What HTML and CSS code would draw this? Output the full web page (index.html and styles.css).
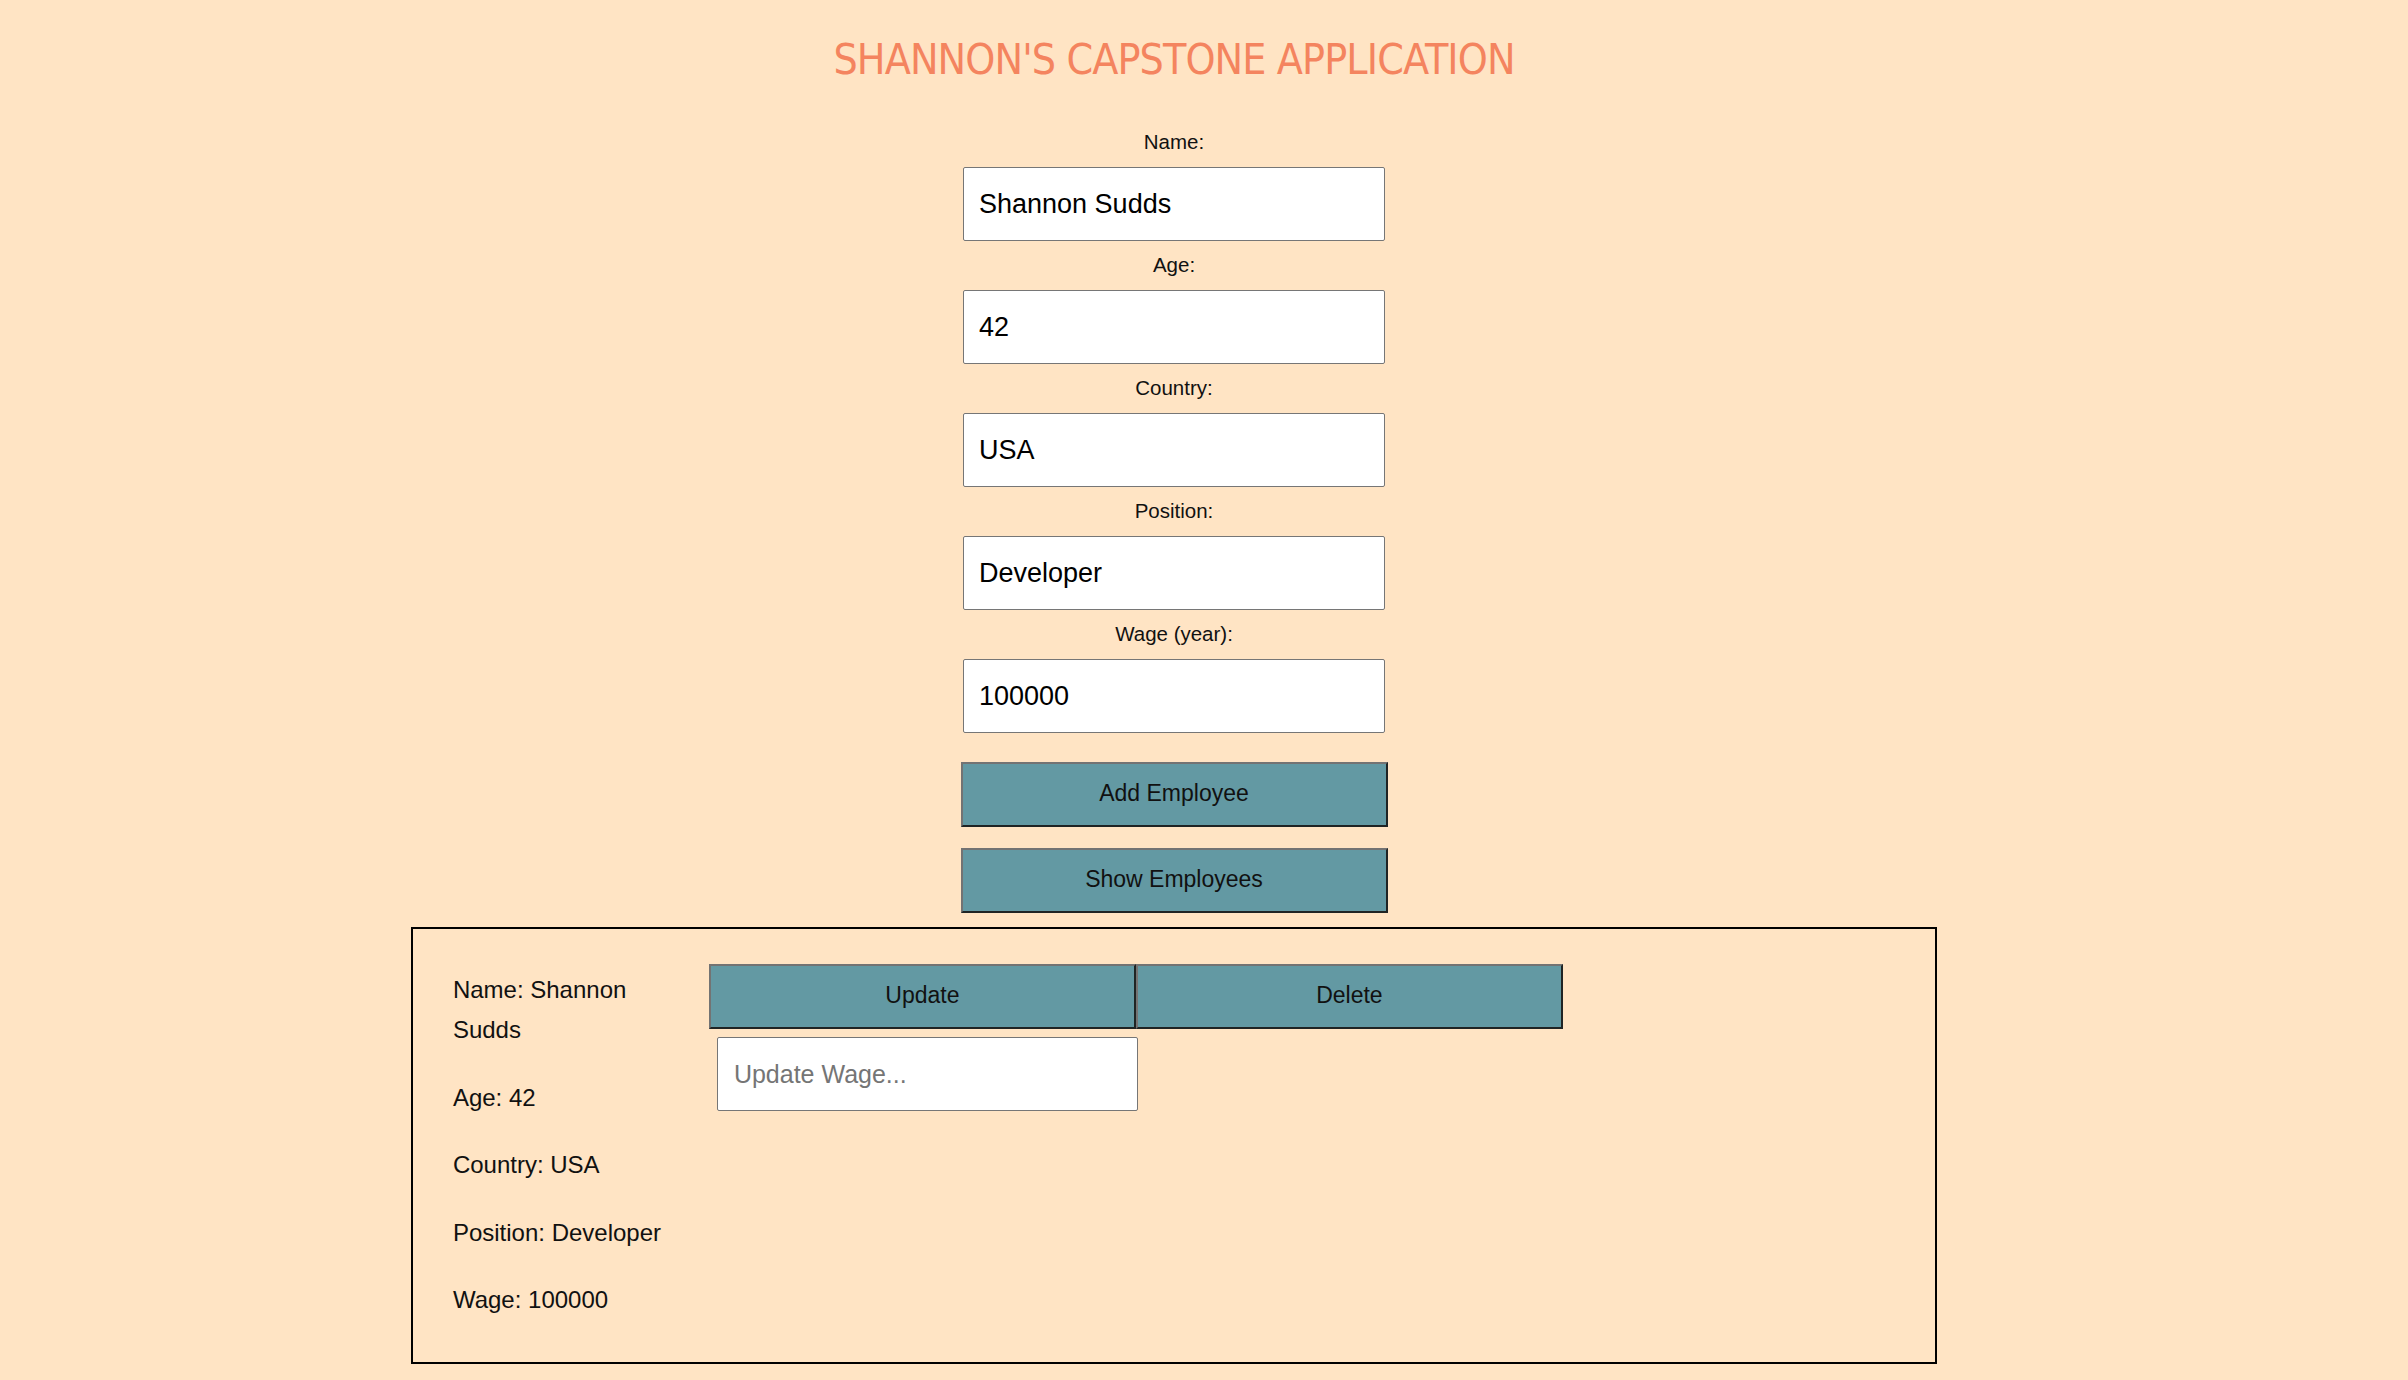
FILE: index.html
```html
<!DOCTYPE html>
<html lang="en">
<head>
<meta charset="utf-8">
<title>Shannon's Capstone Application</title>
<link rel="stylesheet" href="styles.css">
</head>
<body>
<div class="app">
  <h1 class="title">SHANNON'S CAPSTONE APPLICATION</h1>
  <div class="form">
    <label class="label">Name:</label>
    <input class="field" type="text" value="Shannon Sudds">
    <label class="label">Age:</label>
    <input class="field" type="text" value="42">
    <label class="label">Country:</label>
    <input class="field" type="text" value="USA">
    <label class="label">Position:</label>
    <input class="field" type="text" value="Developer">
    <label class="label">Wage (year):</label>
    <input class="field" type="text" value="100000">
    <button class="btn btn-add">Add Employee</button>
    <button class="btn btn-show">Show Employees</button>
  </div>
  <div class="employees">
    <div class="employee">
      <div class="info">
        <p class="info-line">Name: Shannon Sudds</p>
        <p class="info-line">Age: 42</p>
        <p class="info-line">Country: USA</p>
        <p class="info-line">Position: Developer</p>
        <p class="info-line">Wage: 100000</p>
      </div>
      <div class="actions">
        <div class="action-row">
          <button class="btn btn-action">Update</button>
          <button class="btn btn-action">Delete</button>
        </div>
        <input class="wage-input" type="text" placeholder="Update Wage...">
      </div>
    </div>
  </div>
</div>
</body>
</html>
```
FILE: styles.css
```css
html, body {
  margin: 0;
  padding: 0;
  background: #ffe4c4;
}

body {
  font-family: "Liberation Sans", Arial, sans-serif;
  color: #111;
  height: 1380px;
  overflow: hidden;
}

.app {
  width: 2348px;
  display: flex;
  flex-direction: column;
  align-items: center;
}

.title {
  margin: 0;
  padding-top: 35px;
  font-family: "Liberation Sans Narrow", "DejaVu Sans Condensed", "Liberation Sans", sans-serif;
  font-weight: normal;
  font-size: 42.5px;
  letter-spacing: -0.9px;
  line-height: 49px;
  color: #f4845f;
}

.form {
  margin-top: 46px;
  display: flex;
  flex-direction: column;
  align-items: center;
}

.label {
  display: block;
  font-size: 20.5px;
  line-height: 24px;
  margin-bottom: 13px;
  color: #111;
}

.field {
  box-sizing: border-box;
  width: 422px;
  height: 74px;
  margin: 0 0 12px 0;
  padding: 0 15px;
  border: 1px solid #767676;
  border-radius: 2px;
  background: #fff;
  font-family: "Liberation Sans", Arial, sans-serif;
  font-size: 27px;
  color: #000;
  outline: none;
}

.btn {
  box-sizing: border-box;
  width: 427px;
  height: 65px;
  margin: 0;
  padding: 0 0 2px 0;
  background: #6399a3;
  border-top: 2px solid #737373;
  border-left: 2px solid #737373;
  border-bottom: 2px solid #1f2424;
  border-right: 2px solid #1f2424;
  font-family: "Liberation Sans", Arial, sans-serif;
  font-size: 23px;
  color: #111;
}

.btn-add {
  margin-top: 17px;
}

.btn-show {
  margin-top: 21px;
}

.employees {
  box-sizing: border-box;
  width: 65%;
  margin-top: 14px;
  border: 2px solid #000;
  padding: 13.5px 0 14.5px 40px;
}

.employee {
  display: flex;
  align-items: flex-start;
}

.info {
  width: 240px;
  flex: none;
}

.info-line {
  margin: 27.5px 0;
  font-size: 24px;
  line-height: 40px;
  white-space: nowrap;
}

.info-line:first-child {
  white-space: normal;
}

.actions {
  margin-left: 16px;
  margin-top: 21.5px;
  display: flex;
  flex-direction: column;
}

.action-row {
  display: flex;
}

.wage-input {
  box-sizing: border-box;
  width: 421px;
  height: 74px;
  margin: 8px 0 0 8px;
  padding: 0 16px;
  border: 1px solid #767676;
  border-radius: 2px;
  background: #fff;
  font-family: "Liberation Sans", Arial, sans-serif;
  font-size: 25px;
  color: #000;
  outline: none;
}

.wage-input::placeholder {
  color: #757575;
}
```
